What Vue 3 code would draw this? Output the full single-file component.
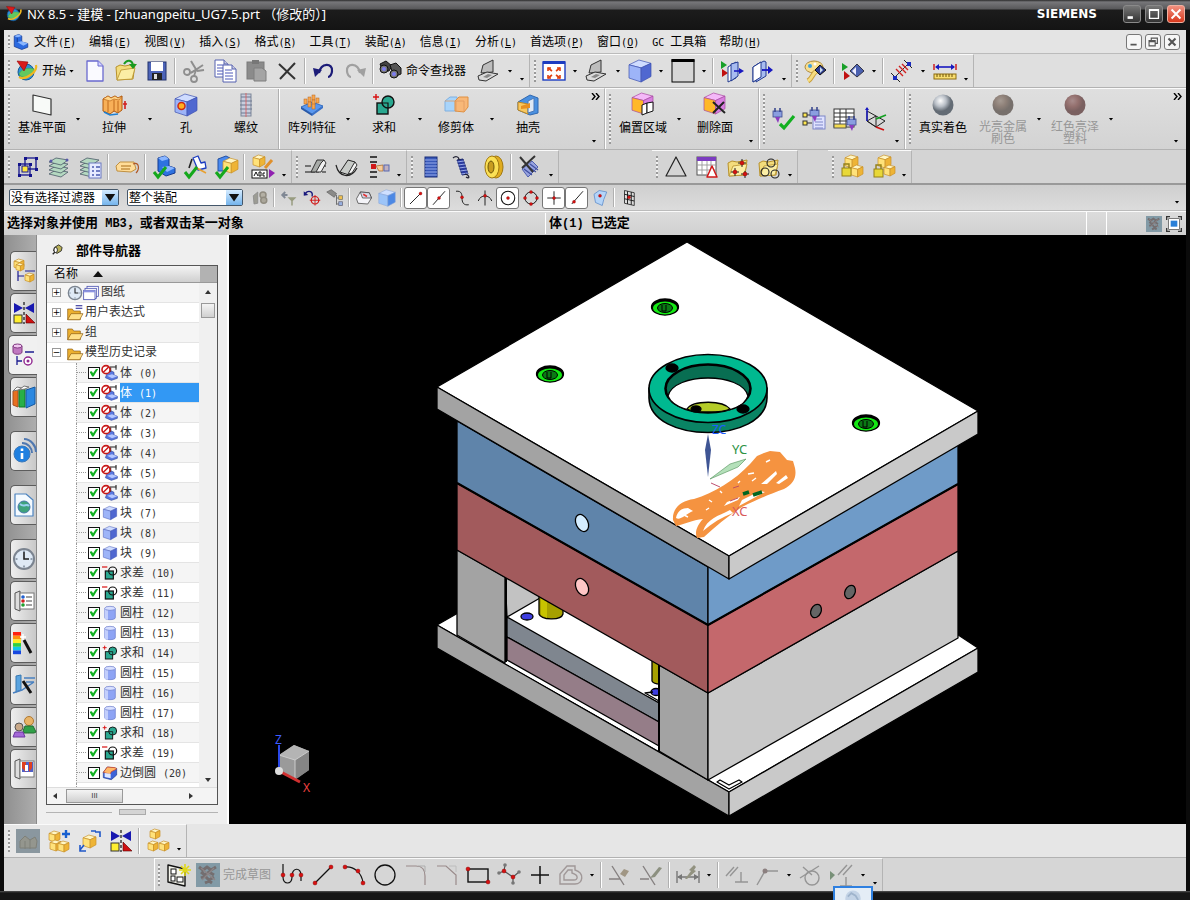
<script setup>
const P = (pts, fill, stroke = 'none', w = 1) =>
  `<polygon points="${pts}" fill="${fill}" stroke="${stroke}" stroke-width="${w}" stroke-linejoin="round"/>`
const L = (d, stroke = '#111', w = 1.2, fill = 'none') =>
  `<path d="${d}" fill="${fill}" stroke="${stroke}" stroke-width="${w}"/>`
const C = (x, y, r, fill, stroke = 'none', w = 1) =>
  `<circle cx="${x}" cy="${y}" r="${r}" fill="${fill}" stroke="${stroke}" stroke-width="${w}"/>`
const R = (x, y, w, h, fill, stroke = 'none', sw = 1) =>
  `<rect x="${x}" y="${y}" width="${w}" height="${h}" fill="${fill}" stroke="${stroke}" stroke-width="${sw}"/>`
const cube = (x, y, s, a, b, c, st) => {
  const p = (u, v) => `${x + u * s},${y + v * s}`
  return P([p(0, 0.22), p(0.45, 0), p(1, 0.15), p(0.55, 0.36)].join(' '), a, st, 0.7) +
    P([p(0, 0.22), p(0.55, 0.36), p(0.55, 1), p(0, 0.82)].join(' '), b, st, 0.7) +
    P([p(0.55, 0.36), p(1, 0.15), p(1, 0.75), p(0.55, 1)].join(' '), c, st, 0.7)
}
const gold = (x, y, s) => cube(x, y, s, '#fff6c4', '#ffe27a', '#eeb436', '#c89028')
const blue = (x, y, s) => cube(x, y, s, '#cfdcff', '#9db4f8', '#5068d0', '#3c50b0')
const dot = (x, y) => C(x, y, 2, '#d81010', '#700', 0.4)
const folder = L('M2 8 L6 6 L11 7 L21 5 L19 20 L3 21 Z', '#b8922c', 1, '#f3dc7c') + L('M3 21 L7 11 L21 9 L18 20 Z', '#b8922c', 0.8, '#fbeea5')
const tick = (x, y) => L(`M${x} ${y} l4 5 l8 -10`, '#14a81c', 3)
const joins = (a, b) => R(5, 10, 11, 11, a, '#111', 1.4) + C(16, 9, 6, b, '#111', 1.4) + L('M10 10 H16 V15', '#111', 1.2)
const plug = (x, y) => R(x, y + 3, 9, 6, '#8a9ee0', '#3c4a90', 0.8) + L(`M${x + 2} ${y} v4 M${x + 7} ${y} v4`, '#3c4a90', 1.6) + P(`${x + 2},${y + 9} ${x + 7},${y + 9} ${x + 5},${y + 15}`, '#8c3cc0')
const laptop = P('4,14 6,6 16,1 16,13', '#bdbdbd', '#333') + P('1,17 10,13 21,15 9,22 2,21', '#dadada', '#333') + P('6,18 11,15 15,16 10,19', '#888')
const sheet = (x, y) => P(`${x},${y} ${x + 9},${y} ${x + 13},${y + 4} ${x + 13},${y + 17} ${x},${y + 17}`, '#fff', '#5560b0') + L(`M${x + 9} ${y} v4 h4`, '#5560b0', 1, '#ccd')
const lines = (x, y, c) => L(`M${x} ${y} h7 M${x} ${y + 3} h8 M${x} ${y + 6} h8 M${x} ${y + 9} h8`, c, 1)
const layers = (c) => [19, 15, 11, 7].map(y => P(`2,${y} 9,${y - 4} 21,${y - 2} 14,${y + 3}`, c, '#4a5a68', 0.8)).join('')
const mirror = P('2,2 11,7 2,12', '#1818b0') + P('22,2 13,7 22,12', '#1818b0') + L('M12 1 V4 M12 6 V9 M12 11 V14 M12 16 V19 M12 21 V23', '#111', 1.2) + R(2, 14, 8, 8, '#ffee30', '#333') + P('14,13 14,22 23,22', '#d01010', '#500', 0.6)
const nx = C(11, 13, 8, '#2c8fd8', '#155a98') + L('M4 15 C8 22 20 16 19 10 C14 8 6 10 4 15', '#3aa84a', 0.6, '#62c860') + L('M4 18 C11 22 23 12 21 6', '#f0b820', 2.2) + P('2,2 13,3 9,12', '#d81c1c', '#900', 0.6)
const sphere = (a, b, c) => `<defs><radialGradient id="s${a.slice(1)}" cx=".38" cy=".3"><stop offset="0" stop-color="${a}"/><stop offset=".55" stop-color="${b}"/><stop offset="1" stop-color="${c}"/></radialGradient></defs><circle cx="12" cy="12" r="10.5" fill="url(#s${a.slice(1)})"/>`
const clock = C(12, 12, 10, '#dfeaf6', '#7b8490', 2) + L('M12 5 V12 H17', '#222', 1.6) + L('M12 3.5v2 M12 18.5v2 M3.5 12h2 M18.5 12h2', '#456', 1)
const noEntry = C(6, 7, 6, '#fff', '#c81818', 2.4) + L('M2 11 L10 3', '#c81818', 2.2)
const book = P('3,4 8,2 8,22 3,20', '#ddd', '#555') + R(8, 4, 14, 16, '#fff', '#777')

const icons = {
  nx,
  part: P('3,4 9,2 13,4 13,12 21,14 21,19 13,22 3,18', '#2b6ae0', '#153a90') + P('3,4 9,2 13,4 7,6', '#8ab6ff') + P('7,12 13,11 21,14 15,17', '#8ab6ff') + L('M7 6 V12', '#153a90'),
  new: P('4,2 15,2 20,7 20,22 4,22', '#fafaff', '#6a6ad0', 1.3) + L('M15 2 V7 H20', '#6a6ad0', 1, '#d4d4ff'),
  open: folder + L('M10 5 C13 0 18 1 19 6', '#1a9a20', 2) + P('15,5 23,5 19,10', '#1a9a20'),
  save: R(3, 3, 18, 18, '#4d64b8', '#22326c') + R(6, 3, 12, 9, '#fff') + R(7, 14, 10, 7, '#222') + R(9, 15, 3, 5, '#ddd'),
  cut: L('M9 14 L21 6 M15 12 L9 2 M15 12 L22 11', '#8e8e8e', 2) + C(5, 13, 3, 'none', '#8e8e8e', 1.8) + C(12, 20, 3, 'none', '#8e8e8e', 1.8) + L('M8 14 L14 11 L12 17', '#8e8e8e', 1.8),
  copy: sheet(2, 1) + lines(4, 6, '#4c58b8') + sheet(10, 6) + lines(12, 11, '#4c58b8'),
  paste: R(3, 3, 17, 17, '#8b8b8b', '#7a7a7a') + R(8, 1, 7, 4, '#777') + P('10,9 18,9 22,12 22,22 10,22', '#a4a4a4', '#7f7f7f'),
  del: L('M4 5 L20 20 M20 4 L5 20', '#333', 2),
  undo: L('M7 14 C9 3 21 4 20 12 C20 15 18 18 16 18', '#1c1c78', 2.2) + P('1,9 10,11 3,18', '#1c1c78'),
  redo: L('M17 14 C15 3 3 4 4 12 C4 15 6 18 8 18', '#a0a0a0', 2.2) + P('23,9 14,11 21,18', '#a0a0a0'),
  find: P('1,5 7,2 13,7 10,12 4,12', '#444', '#111') + P('11,6 17,4 22,9 22,15 15,18', '#555', '#111') + C(5, 10, 4, '#777', '#111') + C(5, 10, 2, '#7d7df0') + C(15, 15, 4, '#777', '#111') + C(15, 15, 2, '#7d7df0'),
  laptop,
  fit: R(1, 3, 22, 18, '#fff', '#1c3cc0', 1.4) + R(1, 2, 22, 3, '#1c3cc0') + L('M6 9 l4 3 M18 9 l-4 3 M6 19 l4 -3 M18 19 l-4 -3', '#e04010', 1.6) + L('M6 12 V9 H9 M15 9 H18 V12 M6 16 V19 H9 M15 19 H18 V16', '#e04010', 1.6),
  cube: blue(1, 1, 22),
  square: R(1, 1, 22, 22, '#d6d6d6', '#000', 1) + R(0.5, 0, 23, 3, '#000'),
  clipA: P('1,2 7,6 1,10', '#18a028') + P('2,10 8,14 2,18', '#c01010') + P('8,8 16,3 16,19 8,23', '#fff', '#223a90') + P('11,5 18,3 18,17 11,22', '#a8bcf0', '#223a90') + L('M14 12 H21', '#1818c0', 1.6) + P('19,9 24,12 19,15', '#1818c0'),
  clipB: P('2,8 10,3 10,18 2,23', '#fff', '#223a90') + P('5,6 13,2 15,3 15,17 5,23', '#a8bcf0', '#223a90') + P('2,8 10,3 10,18 2,23', '#fff', '#223a90') + L('M11 11 H19', '#1818c0', 1.8) + P('17,7 22,11 17,15', '#1818c0'),
  palette: `<ellipse cx="10" cy="8" rx="9" ry="6" fill="#f8df90" stroke="#b08a38"/>` + C(6, 7, 2, '#40a0e0') + C(11, 5, 1.5, '#fff') + L('M13 12 C8 14 9 19 4 22', '#caa040', 5) + L('M13 12 C8 14 9 19 4 22', '#f5dc80', 3) + P('16,6 22,11 16,16 11,11', '#2c3c90', '#111') + P('16,8 19,11 16,14', '#cde'),
  showhide: P('1,4 7,8 1,12', '#18a028') + P('3,12 9,17 3,21', '#c01010') + P('16,5 23,12 16,18 9,12', '#4a60b0', '#334') + P('15,8 15,16 11,12', '#eef'),
  measure: L('M4 19 L19 4', '#333', 1) + L('M6 10 L13 17 M9 7 L16 14 M12 5 L18 11', '#d02020', 1.4) + L('M1 14 l9 9 M14 1 l8 8', '#222', 1) + R(3, 17, 4, 4, '#1c2cc0') + R(17, 3, 4, 4, '#1c2cc0'),
  ruler: L('M1 5 V11 M23 5 V11', '#d02020', 1.5) + L('M3 8 H21', '#1818c0', 1.6) + P('2,8 6,5 6,11', '#1818c0') + P('22,8 18,5 18,11', '#1818c0') + R(1, 15, 22, 5, '#f8de70', '#8e6c10') + L('M4 15v3 M7 15v3 M10 15v3 M13 15v3 M16 15v3 M19 15v3', '#6c5008', 1),
  plane: P('3,2 21,6 21,22 3,18', '#f8faf8', '#333', 1.2),
  extrude: P('1,6 6,3 9,5 13,3 16,5 20,3 20,17 16,20 12,18 8,21 1,18', '#f8b058', '#b0580c') + P('1,6 6,3 9,5 13,3 16,5 20,3 17,7 12,6 8,8', '#ffd68a', '#b0580c', 0.6) + L('M6 8 V19 M12 7 V18 M16 8 V19', '#b0580c', 0.8) + L('M2 19 L8 22 L16 21', '#2080d0', 1.4) + L('M23 16 V8 M21 11 h4', '#d02020', 1.6),
  hole: blue(1, 1, 22) + C(7.5, 13, 3.5, '#ffb020', '#d02810', 1.5),
  thread: R(7, 1, 10, 22, '#c8cede', '#7c8698') + L('M7 4h10 M6 8h12 M6 12h12 M6 16h12 M7 20h10', '#6d7890', 1.2) + L('M12 0 V24', '#d86060', 0.9),
  pattern: P('1,14 12,9 23,13 12,21', '#5a98f0', '#3870c0') + P('1,14 12,21 12,23 1,16', '#2858a8') + P('12,21 23,13 23,15 12,23', '#3870c8') + [[5, 10], [9, 8], [13, 6], [9, 13], [13, 11], [17, 9], [13, 15]].map(([x, y]) => R(x - 1, y - 4, 3, 5, '#f8a850', '#b8641c', 0.5)).join(''),
  unite: joins('#2aa890', '#2aa890') + L('M1 4 h6 M4 1 v6', '#d81010', 1.4),
  trim: P('1,8 6,4 13,4 13,18 1,18', '#a8d4fa', '#80b0e0') + P('11,8 15,4 24,4 24,14 20,19 11,18', '#f8b878', '#e09040') + L('M12 8 V18 M1 8 H20 V18', '#e09a60', 0.8),
  shell: P('2,9 14,2 22,5 22,20 14,22 2,17', '#4a90e0', '#3068b0') + P('2,9 12,11 12,21 2,17', '#f8c860', '#c08820') + P('12,8 18,5 18,18 12,20', '#dfe8f4', '#4878b8') + P('5,13 14,10 14,15 5,16', '#e89020'),
  offset: cube(1, 0, 21, '#f4b8f8', '#ffb828', '#d880e0', '#a848a0') + P('11,12 16,10 16,20 11,22', '#fff', '#111') + P('16,10 22,9 22,18 16,20', '#fff', '#111'),
  delface: cube(1, 0, 21, '#f4b8f8', '#ffb828', '#d880e0', '#a848a0') + L('M10 9 L22 20 M21 9 L10 20', '#222', 2),
  plugok: plug(2, 1) + L('M9 17 L13 21 L23 9', '#12b020', 3.2),
  plugtree: R(1, 6, 4, 4, '#ffe850', '#333') + R(1, 14, 4, 4, '#ffe850', '#333') + L('M5 8h5 M5 16h5', '#333') + R(11, 9, 12, 13, '#dfe2ff', '#7c86c8') + lines(13, 12, '#7c86c8') + plug(8, 0),
  plugtable: R(1, 2, 20, 18, '#fff', '#333') + L('M1 6h20 M1 10h20 M1 14h20 M7 2v18 M13 2v18', '#333', 1) + R(1, 17, 12, 4, '#f4dc50', '#555') + plug(14, 9),
  csys: P('3,4 12,9 12,20 3,14', 'none', '#222') + P('3,14 12,9 21,14 12,20', 'none', '#222') + L('M3 14 V1', '#1818c0', 1.5) + L('M12 12 L22 8', '#12a020', 1.8) + L('M12 20 L20 23', '#d01010', 1.8) + P('1,3 3,0 5,3', '#1818c0'),
  chrome: sphere('#fefefe', '#b8bec6', '#636b74'),
  bronze: sphere('#a59a92', '#8e8078', '#77706c'),
  redball: sphere('#a88c8c', '#94706e', '#7a6060'),
  editsk: R(3, 9, 11, 11, 'none', '#14148c', 1.3) + R(9, 3, 11, 11, 'none', '#14148c', 1.3) + R(6, 11, 6, 6, '#ffe83c', '#14148c') + [[3, 9], [14, 9], [3, 20], [14, 20], [9, 3], [20, 3], [20, 14]].map(([x, y]) => R(x - 1, y - 1, 3, 3, '#14148c')).join(''),
  layers: layers('#b4d8c0') + C(4, 6, 1.5, '#5858a8') + C(20, 5, 1.5, '#5858a8'),
  layerlist: layers('#b4d8c0') + R(11, 8, 12, 15, '#e6eaff', '#6a78c0') + L('M14 12h2 M18 12h4 M14 16h2 M18 16h4 M14 20h2 M18 20h4', '#4a5ab0', 1.6),
  tag: P('1,11 5,7 19,7 21,14 16,17 2,16', '#ffdc98', '#c09040') + L('M6 11h10 M6 14h9', '#a86c18', 1) + L('M18 9 C24 6 25 14 21 18', '#b05828', 1.2),
  okpart: P('6,3 13,1 17,4 17,11 23,13 23,18 14,21 6,16', '#2e72e0', '#153a90') + P('6,3 13,1 17,4 10,6', '#8ab6ff') + P('10,12 17,11 23,13 15,17', '#8ab6ff') + tick(2, 17),
  oksk: P('10,3 15,1 18,8 22,7 23,13 15,15', '#fff', '#1c3cc0', 1.3) + L('M9 4 L6 13', '#222', 1.6) + L('M12 12 L23 18', '#e8a030', 1.6) + tick(2, 17),
  okasm: P('4,4 12,1 16,3 14,16 4,16', '#4a8af0', '#2450a0') + gold(9, 3, 15) + tick(2, 17),
  abc: gold(2, 0, 12) + L('M21 5 L14 13', '#e0902c', 3) + R(1, 15, 15, 8, '#fff', '#111') + L('M3 21l2-4 2 4 M8 17v4h2v-4z M14 18h-2v3h2', '#111', 1) + P('18,14 24,18 18,23', '#9020b0'),
  groove: L('M1 11 H7 M1 17 H11 M18 17 H22 M18 11 H22', '#111', 1.2) + P('7,17 13,5 20,5 15,17', '#a8aba8', '#333') + P('12,17 17,8 20,5 22,8 17,17', '#f0f0f0', '#333'),
  groove2: P('5,17 13,5 20,7 14,20', '#c8cbc8', '#222') + P('13,19 18,10 20,7 22,10 17,18', '#f4f4f4', '#333') + L('M1 10 C4 23 16 24 22 13', '#222', 1.2),
  point: L('M4 2h7 M4 7h7 M4 17h7 M4 22h7', '#111', 1.5) + R(5, 9, 5, 5, '#d01818') + P('10,11 17,10 17,16 13,16', '#f8cc98', '#a87038', 0.8) + R(18, 10, 5, 6, '#c0b0c0', '#5868b0'),
  spring: R(6, 2, 12, 20, '#3858b8', '#182c78') + L('M6 5h12 M6 8h12 M6 11h12 M6 14h12 M6 17h12 M6 20h12', '#98acec', 1),
  spring2: P('7,5 13,4 18,19 12,20', '#2c3ca0', '#182468') + L('M7 7l7-1 M8 10l7-1 M9 13l7-1 M10 16l7-1 M11 19l7-1', '#98a8e8', 1) + L('M3 3 C5 1 9 1 9 5 M15 19 C20 20 20 25 16 22', '#223', 1.2),
  washer: `<ellipse cx="15" cy="12" rx="7" ry="11" fill="#e0ac20" stroke="#a07810"/><ellipse cx="11" cy="12" rx="7" ry="11" fill="#fbe055" stroke="#a07810"/><ellipse cx="10" cy="12" rx="3" ry="6" fill="#c89c20" stroke="#6c5408"/>`,
  springx: P('4,14 14,6 20,12 10,22', '#98a4e0', '#5060b0') + L('M6 14l8 6 M9 11l9 6 M12 9l8 6', '#4050a0', 1.2) + L('M2 2 L15 17 M17 1 L4 13', '#333', 2),
  tri: P('12,2 22,21 2,21', 'none', '#222', 1.2),
  tritable: R(2, 2, 19, 18, '#fff', '#555') + R(2, 2, 19, 4, '#7c3cc0') + L('M2 10h19 M2 15h19 M7 6v14 M12 6v14 M16 6v14', '#999', 0.9) + P('17,11 22,22 12,22', '#fff', '#d01818', 1.5),
  folderpt: folder + L('M16 4v8 M12 8h8 M9 13v8 M5 17h8 M19 16v7 M15 19h8', '#222', 1) + dot(16, 8) + dot(9, 17) + dot(19, 19),
  foldercir: folder + C(14, 8, 4, 'none', '#222', 1.1) + C(8, 17, 4, 'none', '#222', 1.1) + C(18, 19, 4, 'none', '#222', 1.1),
  lock1: gold(5, 0, 13) + gold(11, 10, 12) + R(2, 13, 9, 8, '#e8d838', '#948018') + L('M4 13 V9 h5 V13', '#948018', 1.4),
  lock2: gold(7, 0, 13) + gold(13, 10, 11) + R(3, 14, 9, 8, '#e8d838', '#948018') + L('M5 14 V10 h5 V14', '#948018', 1.4),
  g1: P('3,9 9,4 9,19 4,20', '#9c9c94', '#888') + C(16, 8, 4, '#b4b0a4', '#908c80', 2) + C(17, 15, 4, '#aaa69a', '#908c80', 2),
  g2: L('M10 8 H4 M7 4 L3 8 L7 12', '#808894', 2.5) + P('10,11 22,11 17,16 17,22 15,22 15,16', '#989c80'),
  snapset: L('M3 6 C7 1 14 3 12 10', '#18187c', 1.8) + P('1,3 7,8 1,9', '#18187c') + C(16, 15, 5, 'none', '#d01818', 1.6) + L('M16 8 v14 M9 15 h14', '#d01818', 1.2),
  g3: P('1,4 7,1 14,6 11,11', '#8a8a88', '#666') + L('M14 8 v13 M14 12h5 M14 20h5', '#666') + R(17, 9, 5, 5, '#f0c050', '#776') + R(17, 17, 5, 5, '#98b0e0', '#667'),
  boxsel: P('2,13 7,4 19,5 22,12 17,20 4,19', '#f4f4f8', '#444') + P('7,4 19,5 22,12 10,12', '#d8d8e4', '#444') + L('M11 7 l5 3', '#e03030', 2),
  glass: cube(1, 1, 22, '#cfe0ff', '#9cc4f8', '#4c88e4', '#88a4d8'),
  endpt: L('M4 20 L19 5') + dot(18, 6),
  midpt: L('M4 21 L20 3') + dot(12, 12),
  ctrlpt: L('M4 3 C12 2 12 8 12 12 C12 18 14 22 21 21') + dot(12, 11),
  cross: L('M12 2 V22 M3 16 C6 7 18 7 21 16') + dot(12, 9),
  centre: C(12, 12, 9, 'none', '#111', 1.4) + dot(12, 12),
  quad: C(12, 12, 8, 'none', '#111', 1.3) + dot(12, 4) + dot(12, 20) + dot(4, 12) + dot(20, 12),
  exist: L('M12 3 V21 M3 12 H21') + dot(12, 12),
  oncurve: L('M5 20 L20 3') + dot(8, 17),
  onface: P('4,7 11,2 21,4 17,14 15,22 6,18', '#b4d4f8', '#5888c8') + dot(12, 9),
  grid: P('6,2 19,5 19,22 6,19', '#ddd', '#111') + L('M10 3v17 M15 4v17 M6 7l13 3 M6 13l13 3', '#111', 1.2) + dot(12, 11),
  pressed: R(0, 0, 24, 24, '#8a979f') + P('4,19 4,12 9,7 14,11 19,8 21,12 20,19', '#94968e', '#7f8078') + L('M9 12v8 M14 11v9', '#7f8078', 1),
  pressed2: R(0, 0, 24, 24, '#829aa6') + L('M3 4l4 3 4-3 4 3 5-3 M5 9l4 3 4-3 5 3 M5 15l4-2 4 4 5-3 M9 20l4-2 3 2', '#746e70', 3) + L('M5 5l14 12 M18 5l-12 12', '#8c8486', 1.4),
  full: L('M1 6 V1 H6 M18 1 H23 V6 M23 18 V23 H18 M6 23 H1 V18', '#333', 2) + R(4, 4, 16, 16, '#fff', '#444') + R(7, 7, 10, 9, '#2a80d8'),
  asmadd: gold(2, 2, 11) + gold(3, 11, 11) + gold(11, 12, 11) + L('M19 1 v8 M15 5 h8', '#1860d0', 2.4),
  asmmove: gold(5, 6, 13) + L('M17 3 h5 v5 M13 2 l5 0 M6 16 l-4 5 M2 16 v6 h6', '#2058c8', 1.6),
  mirror,
  asmarr: gold(4, 0, 10) + gold(2, 12, 10) + gold(13, 12, 10),
  sketch: P('2,2 19,6 19,23 2,19', '#f4f4ec', '#111', 1.4) + R(5, 6, 5, 5, '#fff', '#111') + R(5, 13, 4, 5, '#fff', '#111') + R(11, 14, 6, 5, '#fff', '#111') + L('M19 1v12 M13 7h12 M15 3l8 8 M23 3l-8 8', '#e0d818', 1.6),
  profile: L('M3 1 V14 C3 22 12 22 12 14 C12 4 21 4 21 12 V18') + dot(3, 12) + dot(12, 12) + dot(21, 12),
  line: L('M4 20 L20 4') + dot(4, 20) + dot(20, 4),
  arc: L('M3 4 C12 3 20 10 21 20') + dot(3, 4) + dot(16, 8) + dot(21, 20),
  circle: C(12, 12, 10, 'none', '#111', 1.3),
  fillet: L('M2 3 H12 C19 3 21 8 21 13 V22', '#998a8a', 1.2) + L('M14 3 H21 V9', '#aaa', 0.9),
  chamfer: L('M2 3 H11 L21 12 V22', '#998a8a', 1.2) + L('M14 3 H21 V9', '#bbb', 0.9),
  rect: R(2, 6, 20, 13, 'none', '#111', 1.4) + dot(2, 6) + dot(22, 19),
  spline: L('M2 10 L7 8 L8 2 M7 8 L16 14 L22 9 M16 14 V20', '#555', 1.2) + dot(7, 8) + dot(16, 14) + C(2, 10, 1.8, '#777') + C(8, 2, 1.8, '#777') + C(22, 9, 1.8, '#777') + C(16, 20, 1.8, '#777'),
  plus: L('M12 3 V21 M3 12 H21', '#111', 1.5),
  offc: L('M1 21 V11 L8 3 H16 V7 C26 10 24 21 16 21 Z M5 17 V12 L9 7 H13 V10 C20 12 19 17 15 17 Z', '#a09898', 1.4),
  qtrim: L('M4 3 L16 22 M1 16 H12', '#858080', 1.4) + P('12,11 16,6 21,8 17,14', '#a09684'),
  qext: L('M4 3 L16 22 M1 16 H10', '#858080', 1.4) + P('11,15 20,4 23,5 16,14', '#8c9080'),
  dim: L('M1 8 V20 M23 8 V20 M2 14 H22', '#777', 1.4) + P('1,14 6,11 6,17', '#777') + P('23,14 18,11 18,17', '#777') + P('9,16 15,8 13,7 18,2 20,4 18,7 20,8 11,16', '#929280'),
  constr: L('M1 13 L9 4 M5 13 L13 4 M16 9 V19 M10 19 H23', '#959595', 1.4),
  constr2: L('M1 22 L9 8 H22', '#959595', 1.4) + C(9, 8, 2.5, '#8c8080'),
  tang: C(13, 15, 7, 'none', '#959595', 1.4) + L('M1 15 L20 3 M4 4 L13 12', '#959595', 1.4),
  constr3: P('0,8 5,12 0,17', '#789078') + L('M8 12 L17 2 M13 12 L22 2 M16 14 V23 M10 23 H22', '#959595', 1.4),
  // navigator glyphs
  clock,
  sheets: R(6, 2, 17, 15, '#fff', '#4850b0', 1.2) + R(3, 5, 17, 15, '#fff', '#4850b0', 1.2) + R(1, 8, 17, 14, '#fff', '#4850b0', 1.2) + R(1, 8, 17, 3, '#8c94e0'),
  fold: P('1,22 1,6 8,6 10,9 20,9 20,22', '#ecb030', '#8c5c10') + P('1,22 6,13 24,13 19,22', '#ffe08a', '#8c5c10'),
  foldeq: P('1,22 1,6 8,6 10,9 20,9 20,22', '#ecb030', '#8c5c10') + P('1,22 6,13 24,13 19,22', '#ffe08a', '#8c5c10') + L('M13 1h10 M13 5h10', '#1c1c90', 1.6),
  body: P('8,12 14,9 18,11 18,15 23,17 23,20 14,23 5,19', '#5a78e0', '#3048a0') + P('8,16 15,14 23,17 15,20', '#b6c8ff') + L('M13 4 V10 M12 3 h10 M21 0 V7', '#222', 1.6) + noEntry,
  block: blue(2, 2, 20),
  subtract: R(5, 9, 12, 12, '#2aa890', '#111', 1.8) + C(16, 9, 6, 'none', '#111', 1.8) + L('M0 3 h8', '#d81010', 1.8),
  cyl: `<path d="M4 5 V19 C4 23 20 23 20 19 V5" fill="#8ea4f4" stroke="#6878c8"/><path d="M4 5 V19 C4 21 7 22 9 22 V7Z" fill="#c3cffc"/><ellipse cx="12" cy="5" rx="8" ry="3" fill="#d8e0ff" stroke="#6878c8"/>`,
  blend: P('2,11 8,3 22,5 22,15 14,22 2,19', '#3c62d8', '#203c90') + P('2,11 8,3 20,4 22,6 14,10 12,14', '#ffb868', '#d03818') + P('4,12 13,13 13,20 4,18', '#dfe8ff'),
  // resource bar
  tabasm: gold(2, 0, 10) + gold(4, 4, 8) + L('M6 12 V22 M6 17 H12 M13 12h10', '#1c1c90', 1.2) + gold(13, 14, 9),
  tabpart: `<path d="M2 3 V9 C2 12 11 12 11 9 V3" fill="#c078c0" stroke="#803880"/><ellipse cx="6.5" cy="3" rx="4.500" ry="2" fill="#f0c8f0" stroke="#803880"/>` + L('M6 13 V22 M6 18 H11 M14 9h9', '#1c1c90', 1.3) + C(17, 18, 4, '#fff', '#902890', 1.4) + C(17, 18, 1.5, '#902890'),
  books: P('1,6 6,4 6,22 1,20', '#e87020', '#a85020') + P('7,5 13,3 13,22 7,22', '#28b048', '#107828') + P('14,5 23,2 23,19 14,23', '#2c88e0', '#1458a0') + P('1,6 5,2 10,3 6,5', '#fff', '#777') + P('7,5 12,1 17,2 13,4', '#fff', '#777'),
  info: C(10, 15, 8, '#2080e0', '#3c78b8') + L('M10 14 V20 M10 9.5 V12', '#fff', 2.6) + L('M10 4 C16 4 20 9 20 14 M12 0 C19 0 24 7 24 13', '#5078b0', 2),
  web: P('3,1 14,1 21,7 21,23 3,23', '#f4faff', '#4c84c0', 1.2) + C(12, 14, 6, '#3ea27c', '#4878a8') + L('M8 11 C12 15 14 10 17 13', '#9ad0f0', 2),
  list: book + C(11, 8, 1.8, '#2060d0') + C(11, 12, 1.8, '#d02020') + C(11, 16, 1.8, '#20a030') + L('M14 8h6 M14 12h6 M14 16h6', '#444', 1.2),
  rainbow: ['#ff2010', '#ff9010', '#ffee20', '#30d040', '#10c8e8', '#1848e0'].map((c, i) => R(1, 1 + i * 3.7, 8, 3.7, c)).join('') + L('M12 9 L19 22', '#111', 3) + L('M11 3v6 M8 6h6', '#fff', 1.4),
  wand: P('4,3 9,2 9,17 4,19', '#5aa4e0', '#3878b0') + L('M1 20 L10 17 L22 9 M12 5 H23 M14 9 h8', '#4880c0', 1.4) + L('M11 8 L19 20', '#111', 3),
  people: C(17, 6, 4.5, '#e8b468', '#b07830') + P('11,16 13,11 21,11 24,17 22,18 12,18', '#30a048', '#246c30') + C(7, 12, 4, '#c8a888', '#555') + P('1,22 3,17 11,17 13,22', '#a468d8', '#6c38a0'),
  photo: book + R(10, 5, 11, 10, '#5060c8') + P('10,5 14,5 14,15 10,11', '#e04020') + P('20,5 17,5 17,15 20,11', '#e04020') + R(13, 8, 3, 6, '#fff'),
}

const a = { k: 'arrow' }
const s = { k: 'sep' }
const o = { k: 'more' }
const i = (...n) => n.map(x => ({ k: 'icon', n: x }))
const big = (n, t, off) => ({ k: 'big', n, t, off })

const menus = [['文件', 'F'], ['编辑', 'E'], ['视图', 'V'], ['插入', 'S'], ['格式', 'R'], ['工具', 'T'], ['装配', 'A'], ['信息', 'I'], ['分析', 'L'], ['首选项', 'P'], ['窗口', 'O'], ['工具箱', ''], ['帮助', 'H']]

const rows = [
  { cls: 'r1', bars: [
    { items: [{ k: 'start', n: 'nx', t: '开始' }, ...i('new', 'open', 'save'), s, ...i('cut', 'copy', 'paste', 'del'), s, ...i('undo', 'redo'), s, { k: 'label', n: 'find', t: '命令查找器' }, ...i('laptop'), a, o] },
    { items: [...i('fit'), a, ...i('laptop'), a, ...i('cube'), a, ...i('square'), a, s, ...i('clipA', 'clipB'), o] },
    { items: [...i('palette'), s, ...i('showhide'), a, s, ...i('measure'), a, ...i('ruler'), o] },
  ] },
  { cls: 'r2', bars: [
    { items: [big('plane', '基准平面'), a, big('extrude', '拉伸'), a, big('hole', '孔'), big('thread', '螺纹'), s, big('pattern', '阵列特征'), a, big('unite', '求和'), a, big('trim', '修剪体'), a, big('shell', '抽壳'), { k: 'chev' }] },
    { items: [big('offset', '偏置区域'), a, big('delface', '删除面'), o] },
    { items: [...i('plugok', 'plugtree', 'plugtable', 'csys'), o] },
    { cls: 'grow', items: [big('chrome', '真实着色'), big('bronze', '光亮金属刷色', true), a, big('redball', '红色亮泽塑料', true), a, { k: 'chev' }] },
  ] },
  { cls: 'r3', bars: [
    { items: [...i('editsk', 'layers', 'layerlist'), s, ...i('tag'), s, ...i('okpart', 'oksk', 'okasm'), s, ...i('abc'), o] },
    { items: [...i('groove', 'groove2', 'point'), o] },
    { items: [...i('spring', 'spring2', 'washer'), s, ...i('springx'), o] },
    { cls: 'far', items: [...i('tri', 'tritable', 'folderpt', 'foldercir'), o] },
    { cls: 'near', items: [...i('lock1', 'lock2'), o] },
  ] },
]
const bottom = [
  { cls: 'b1', bars: [{ items: [...i('pressed', 'asmadd', 'asmmove', 'mirror'), s, ...i('asmarr'), o] }] },
  { cls: 'b2', bars: [{ items: [...i('sketch'), { k: 'label', n: 'pressed2', t: '完成草图', off: true }, ...i('profile', 'line', 'arc', 'circle', 'fillet', 'chamfer', 'rect', 'spline', 'plus', 'offc'), a, s, ...i('qtrim', 'qext'), s, ...i('dim'), a, s, ...i('constr', 'constr2'), a, ...i('tang', 'constr3'), a, o] }] },
]
const snaps = [['g1'], 0, ['g2'], ['snapset'], ['g3'], 0, ['boxsel'], ['glass'], 0, ['endpt', 1], ['midpt', 1], ['ctrlpt'], ['cross'], ['centre', 1], ['quad'], ['exist', 1], ['oncurve', 1], ['onface'], 0, ['grid']]
const tabs = [['tabasm'], ['mirror'], ['tabpart', 'on'], ['books'], ['info', 'gap'], ['web', 'gap'], ['clock', 'gap'], ['list'], ['rainbow'], ['wand'], ['people'], ['photo']]

const roots = [
  { n: ['clock', 'sheets'], t: '图纸', e: '+' },
  { n: ['foldeq'], t: '用户表达式', e: '+' },
  { n: ['fold'], t: '组', e: '+' },
  { n: ['fold'], t: '模型历史记录', e: '−' },
]
const kinds = { body: '体', block: '块', subtract: '求差', cyl: '圆柱', unite: '求和', blend: '边倒圆' }
const feats = ['body', 'body', 'body', 'body', 'body', 'body', 'body', 'block', 'block', 'block', 'subtract', 'subtract', 'cyl', 'cyl', 'unite', 'cyl', 'cyl', 'cyl', 'unite', 'subtract', 'blend']
  .map((n, id) => ({ n, id, t: kinds[n] }))
</script>

<template>
  <div class="win">
    <header class="title">
      <svg class="ic18" viewBox="0 0 24 24" v-html="icons.nx"></svg>
      <h1>NX 8.5 - 建模 - [zhuangpeitu_UG7.5.prt （修改的）]</h1>
      <span class="brand">SIEMENS</span>
      <button class="cap" aria-label="最小化"><svg viewBox="0 0 18 18"><path d="M4 13h6" stroke="#fff" stroke-width="3" /></svg></button>
      <button class="cap" aria-label="最大化"><svg viewBox="0 0 18 18"><path d="M4 4h10v10h-10z M4 5h10" stroke="#fff" stroke-width="1.5" fill="none" /></svg></button>
      <button class="cap close" aria-label="关闭"><svg viewBox="0 0 18 18"><path d="M4 4l10 10M14 4l-10 10" stroke="#fff" stroke-width="2.2" /></svg></button>
    </header>

    <div class="body">
      <nav class="menu">
        <span class="grip"></span>
        <svg class="ic18" viewBox="0 0 24 24" v-html="icons.part"></svg>
        <div class="items">
          <button v-for="m in menus" :key="m[0]"><span v-if="!m[1]" class="lat">GC </span>{{ m[0] }}<span v-if="m[1]" class="lat">(<u>{{ m[1] }}</u>)</span></button>
        </div>
        <button class="mdi" aria-label="最小化窗口"><svg viewBox="0 0 16 16"><path d="M4 11h7" stroke="#555" stroke-width="2" /></svg></button>
        <button class="mdi" aria-label="还原窗口"><svg viewBox="0 0 16 16"><path d="M6 6V3.5h7v6h-2M3.5 6.5h7v6h-7z M3.5 7.5h7" stroke="#555" stroke-width="1.3" fill="none" /></svg></button>
        <button class="mdi" aria-label="关闭窗口"><svg viewBox="0 0 16 16"><path d="M4 4l8 8M12 4l-8 8" stroke="#555" stroke-width="2.4" /></svg></button>
      </nav>

      <div v-for="row in rows" :key="row.cls" class="row" :class="row.cls">
        <div v-for="(bar, bi) in row.bars" :key="bi" class="bar" :class="bar.cls" role="toolbar">
          <span class="grip"></span>
          <template v-for="(it, k) in bar.items" :key="k">
            <span v-if="it.k === 'sep'" class="sep"></span>
            <button v-else-if="it.k === 'arrow'" class="arrow" aria-label="展开"></button>
            <button v-else-if="it.k === 'more'" class="arrow more" aria-label="更多"></button>
            <div v-else-if="it.k === 'chev'" class="chev"><button aria-label="更多命令"><svg viewBox="0 0 9 7"><path d="M1 0l3 3.500-3 3.500M5 0l3 3.500-3 3.500" fill="none" stroke="#000" stroke-width="1.400" /></svg></button><button class="arrow more" aria-label="更多"></button></div>
            <button v-else :class="[it.k, { off: it.off }]" :aria-label="it.t || it.n">
              <svg class="ic" viewBox="0 0 24 24" v-html="icons[it.n]"></svg>
              <span v-if="it.t">{{ it.t }}</span>
              <i v-if="it.k === 'start'" class="tri"></i>
            </button>
          </template>
        </div>
      </div>

      <div class="filters">
        <label class="pick w1"><select aria-label="选择过滤器"><option>没有选择过滤器</option></select><i></i></label>
        <label class="pick w2"><select aria-label="选择范围"><option>整个装配</option></select><i></i></label>
        <template v-for="(sn, k) in snaps" :key="k">
          <button v-if="sn" class="snap" :class="{ on: sn[1] }" :aria-label="sn[0]"><svg class="ic18" viewBox="0 0 24 24" v-html="icons[sn[0]]"></svg></button>
          <span v-else class="sep"></span>
        </template>
        <button class="arrow more last" aria-label="更多"></button>
      </div>

      <div class="status">
        <p class="cue">选择对象并使用<span> MB3</span>，或者双击某一对象</p>
        <p class="msg">体<span>(1) </span>已选定</p>
        <span class="cell"></span>
        <span class="cell wide"></span>
        <button aria-label="选择"><svg class="ic16" viewBox="0 0 24 24" v-html="icons.pressed2"></svg></button>
        <button aria-label="全屏"><svg class="ic16" viewBox="0 0 24 24" v-html="icons.full"></svg></button>
      </div>

      <main class="main">
        <div class="tabs">
          <button v-for="t in tabs" :key="t[0]" :class="t[1]" :aria-label="t[0]"><svg class="ic" viewBox="0 0 24 24" v-html="icons[t[0]]"></svg></button>
        </div>
        <aside class="nav">
          <div class="navhead">
            <svg class="pin" viewBox="0 0 14 14"><path d="M2 12L5 9" stroke="#222" stroke-width="1.5" /><path d="M4 4l5-3 4 3-1 4-5 3-4-3z" fill="#b8b058" stroke="#222" /><ellipse cx="5.5" cy="7" rx="2" ry="3" fill="#fff" stroke="#222" /></svg>
            <h2>部件导航器</h2>
          </div>
          <div class="tree">
            <div class="th"><button>名称<i></i></button><span></span></div>
            <div class="tb">
              <ul>
                <li v-for="r in roots" :key="r.t" class="root">
                  <button class="exp" :aria-label="'展开' + r.t">{{ r.e }}</button>
                  <svg v-for="n in r.n" :key="n" class="ic16" viewBox="0 0 24 24" v-html="icons[n]"></svg>
                  <span>{{ r.t }}</span>
                </li>
                <li v-for="f in feats" :key="f.id" class="leaf" :class="{ sel: f.id === 1 }">
                  <label><input type="checkbox" checked><svg class="ic16" viewBox="0 0 24 24" v-html="icons[f.n]"></svg><span class="txt">{{ f.t }}<span class="lat">({{ f.id }})</span></span></label>
                </li>
                <li class="leaf"></li>
              </ul>
              <div class="vs"><i class="up"></i><span class="thumb"></span><i class="down"></i></div>
            </div>
            <div class="hs"><i class="lf"></i><span class="thumb">III</span><i class="rt"></i></div>
          </div>
          <div class="split"><span></span></div>
        </aside>

        <svg class="view" viewBox="229 235 957 589" preserveAspectRatio="xMidYMid meet" role="img" aria-label="模具装配">
          <g stroke="#000" stroke-width="1.3" stroke-linejoin="round">
            <polygon points="437,625 708,470 978,648 729,792" fill="#fff" />
            <polygon points="437,625 729,792 729,816 437,648" fill="#a3a3a3" />
            <polygon points="729,792 978,648 978,672 729,816" fill="#c9c9c9" />
            <polygon points="505,570 660,640 660,751 505,663" fill="#fff" stroke="none" />
            <polygon points="505,575 540,590 540,598 507,617" fill="#c2c2c2" />
            <path d="M539 590V614C541 620 561 621 563 614V600Z" fill="#a6a000" />
            <path d="M547 590V618L541 615V590Z" fill="#c8c400" stroke="none" />
            <path d="M652 655V681C653 683 656 684 660 684V655Z" fill="#a6a000" />
            <ellipse cx="527" cy="616.5" rx="6" ry="3.5" fill="#3e3ee0" />
            <ellipse cx="656" cy="692" rx="5" ry="3.5" fill="#3e3ee0" />
            <path d="M653 692L645 693L659 701M648 697L659 703" fill="none" />
            <polygon points="507,617 659,703 659,722 507,637" fill="#7f868f" />
            <polygon points="507,637 659,722 659,746 507,660" fill="#957d88" />
            <polygon points="457,550 505,577 505,663 457,635" fill="#a3a3a3" />
            <path d="M506 577V662" stroke-width="2" />
            <polygon points="659,665 708,693 708,780 659,751" fill="#a3a3a3" />
            <path d="M659 665V751" stroke-width="2" />
            <polygon points="708,693 958,551 958,638 708,780" fill="#c9c9c9" />
            <polygon points="457,483 708,625 708,693 457,550" fill="#a25a5c" />
            <polygon points="708,625 958,484 958,551 708,693" fill="#c4686c" />
            <polygon points="457,421 708,567 708,625 457,483" fill="#5f84aa" />
            <polygon points="708,567 958,440 958,484 708,625" fill="#6f9bc8" />
            <path d="M457 483L708 625L958 484" fill="none" stroke-width="2.2" />
            <polygon points="687,242 978,411 729,556 437,387" fill="#fff" />
            <polygon points="437,387 729,556 729,579 437,409" fill="#a3a3a3" />
            <polygon points="729,556 978,411 978,434 729,579" fill="#c9c9c9" />
            <ellipse cx="582" cy="523" rx="6" ry="9" transform="rotate(-25 582 523)" fill="#d5edff" />
            <ellipse cx="582" cy="587" rx="6" ry="9" transform="rotate(-25 582 587)" fill="#ffc6c6" />
            <ellipse cx="816" cy="611" rx="5" ry="7" transform="rotate(25 816 611)" fill="#656565" />
            <ellipse cx="850" cy="592" rx="5" ry="7" transform="rotate(25 850 592)" fill="#656565" />
            <path d="M717 782L729 789L742 782L739 780L729 785L720 780Z" fill="#fff" />
            <g v-for="p in [[665, 307], [550, 374], [866, 423]]" :key="p[0]">
              <ellipse :cx="p[0]" :cy="p[1]" rx="13.5" ry="8" fill="#000" />
              <ellipse :cx="p[0]" :cy="p[1] + 1" rx="12" ry="6.5" fill="#14e814" stroke="none" />
              <ellipse :cx="p[0]" :cy="p[1] + 1" rx="7.5" ry="4.5" fill="#0a7a14" stroke-width="1" />
              <path :d="`M${p[0] - 3} ${p[1] - 2}v6h4v-6`" fill="none" stroke-width="1" />
            </g>
            <g>
              <path d="M649 388V398C650 444 766 444 767 398V388Z" fill="#0a8464" stroke-width="1.6" />
              <ellipse cx="708" cy="388.5" rx="59" ry="34" fill="#00b990" stroke-width="1.6" />
              <ellipse cx="708" cy="388.5" rx="42.5" ry="24" fill="#086e52" stroke-width="2.6" />
              <path d="M668 396C674 372 742 372 748 396C743 410 724 412 708 412C692 412 673 408 668 396Z" fill="#fff" />
              <path d="M687 409C693 400 723 400 730 409C722 413 694 413 687 409Z" fill="#b4cc28" />
              <ellipse cx="672" cy="368" rx="6" ry="4" /><ellipse cx="696" cy="409" rx="5" ry="3" /><ellipse cx="743" cy="409" rx="6" ry="4" />
            </g>
          </g>
          <text x="712" y="434" font-size="12" fill="#1f5cff">ZC</text>
          <polygon points="708,434 711,450 708,477 705,450" fill="#3f5594" />
          <polygon points="710,479 730,464 746,459 738,467" fill="#b4e0ba" stroke="#4f8f58" stroke-width=".6" />
          <text x="732" y="454" font-size="13" fill="#2c9244">YC</text>
          <path d="M711 483L720 487" stroke="#c05070" stroke-width="1" />
          <path fill-rule="evenodd" fill="#f59340" d="M673 520C672 509 680 501 694 499C714 493 735 480 750 464L757 456L764 453L770 451L780 452L787 460L793 461L795 468C797 478 793 484 784 489C770 494 758 499 742 507C728 516 716 526 704 537L697 538C694 532 698 524 703 519C692 520 685 524 676 526ZM676 518C680 521 686 514 693 511L688 508C681 508 677 512 676 518ZM703 531C712 523 722 517 733 513L730 510C718 516 707 519 703 531ZM724 506L738 500L740 497L727 502ZM739 506L765 492L760 491L742 500ZM761 484L776 471L777 474L767 484ZM776 483L786 475L788 478L779 484Z" />
          <path d="M682 514L688 517M709 500L712 502M720 491L722 493M766 462L770 460M748 474L754 473M752 481L756 478M738 483L740 481M706 510L709 508" stroke="#fff" stroke-width="1.4" />
          <path d="M743 494L749 492M753 495L762 492" stroke="#062" stroke-width="3.5" />
          <path d="M733 488L739 486M730 501L738 498" stroke="#c05060" stroke-width="1" />
          <text x="732" y="516" font-size="13" fill="#d85a5a">XC</text>
          <g>
            <polygon points="279,755 294,745 309,751 309,770 294,780 279,771" fill="#9a9a9a" />
            <polygon points="279,755 294,745 309,751 295,760" fill="#b4b4b4" /><polygon points="295,760 309,751 309,770 295,780" fill="#858585" />
            <path d="M279 755L295 760L309 751M295 760V780" fill="none" stroke="#ccc" />
            <path d="M279 770V745" stroke="#2a48e8" stroke-width="2" /><path d="M279 771L300 782" stroke="#d03030" stroke-width="3" />
            <circle cx="279" cy="771" r="4" fill="#ddd" />
            <text x="275" y="744" font-size="12" fill="#3d5cff">Z</text><text x="303" y="792" font-size="12" fill="#f04040">X</text>
          </g>
        </svg>
      </main>

      <div v-for="row in bottom" :key="row.cls" class="row" :class="row.cls">
        <div v-for="(bar, bi) in row.bars" :key="bi" class="bar" role="toolbar">
          <span class="grip"></span>
          <template v-for="(it, k) in bar.items" :key="k">
            <span v-if="it.k === 'sep'" class="sep"></span>
            <button v-else-if="it.k === 'arrow'" class="arrow" aria-label="展开"></button>
            <button v-else-if="it.k === 'more'" class="arrow more" aria-label="更多"></button>
            <button v-else :class="[it.k, { off: it.off }]" :aria-label="it.t || it.n">
              <svg class="ic" viewBox="0 0 24 24" v-html="icons[it.n]"></svg>
              <span v-if="it.t">{{ it.t }}</span>
            </button>
          </template>
        </div>
      </div>
    </div>
    <footer><span class="pop"><svg viewBox="0 0 40 14"><circle cx="20" cy="12" r="9" fill="#c3d3e6" /><path d="M14 10l4-4 5 3 3 5" fill="none" stroke="#9fb4cc" stroke-width="2" /></svg></span></footer>
  </div>
</template>

<style>
body { margin: 0; background: #111; }
</style>

<style scoped>
* { box-sizing: border-box; }
button { border: 0; background: none; padding: 0; margin: 0; font: inherit; color: inherit; }
svg { display: block; flex: none; }
h1, h2, p, ul { margin: 0; padding: 0; list-style: none; }
.win { height: 100vh; display: flex; flex-direction: column; overflow: hidden; position: relative; background: #0b0b0b; color: #000; font: 12px/14px "Liberation Sans", "Noto Sans CJK SC", sans-serif; }
.lat { font: 10px/12px "DejaVu Sans Mono", monospace; white-space: pre; }
.ic { width: 24px; height: 24px; overflow: visible; }
.ic18 { width: 18px; height: 18px; }
.ic16 { width: 16px; height: 16px; overflow: visible; }

.title { height: 30px; flex: none; display: flex; align-items: center; gap: 4px; padding: 0 5px 2px 5px; background: linear-gradient(#2c2c2c 0, #77777a 2px, #58585a 9px, #1c1c1c 10px, #141414 100%); }
.title h1 { flex: 1; color: #fff; font: 13px/18px "Noto Sans", "Noto Sans CJK SC", sans-serif; white-space: pre; }
.brand { color: #fff; font: bold 12px/16px "DejaVu Sans", sans-serif; margin-right: 22px; }
.cap { width: 18px; height: 18px; border: 1px solid #8a8a8a; border-radius: 3px; background: linear-gradient(#777, #333); }
.cap.close { background: linear-gradient(#f09080, #d8381c); border-color: #f0b0a0; }
.cap svg, .mdi svg { width: 100%; height: 100%; }

.body { flex: 1; min-height: 0; margin: 0 4px; display: flex; flex-direction: column; background: #dadada; }
.menu { height: 24px; flex: none; display: flex; align-items: center; padding: 0 6px 0 4px; background: #e4e4e4; border-bottom: 1px solid #bbb; }
.menu .items { flex: 1; display: flex; gap: 13px; margin-left: 4px; white-space: nowrap; }
.mdi { width: 16px; height: 16px; margin-left: 3px; border: 1px solid #777; border-radius: 3px; background: #f6f6f6; }
.grip { width: 4px; align-self: stretch; margin: 5px 0; flex: none; background: repeating-linear-gradient(#999 0 2px, #f2f2f2 2px 4px) left / 2px 100% no-repeat; }

.row { display: flex; flex: none; background: linear-gradient(#dfdfdf, #d3d3d3); border-bottom: 1px solid #b2b2b2; }
.r1, .b1 { height: 34px; background: #dfdfdf; }
.r2 { height: 62px; }
.r3 { height: 35px; background: #d4d4d4; border-bottom: 2px solid #999; }
.b1 { background: #e6e6e6; }
.b2 { height: 33px; padding-left: 150px; background: #d6d6d6; border: 0; }
.bar { display: flex; align-items: center; padding: 0 1px 0 4px; border-right: 1px solid #b4b4b4; border-top: 1px solid #fafafa; flex: none; }
.b2 .bar { border-left: 1px solid #fff; padding-left: 3px; }
.r2 .bar:not(.grow) { box-shadow: 1px 0 #fff; }
.grow { flex: 1; border-right: 0; }
.grow .chev { flex: 1; }
.far { margin-left: 93px; }
.near { margin-left: 30px; }
.icon { width: 31px; display: flex; justify-content: center; }
.start, .label { display: flex; align-items: center; gap: 3px; padding-left: 3px; white-space: nowrap; }
.start { width: 67px; }
.label { width: 97px; }
.b2 .label { width: 83px; }
.off { color: #979797; }
.sep { width: 6px; align-self: stretch; margin: 3px 0; background: linear-gradient(90deg, transparent 2px, #b0b0b0 2px 3px, #fff 3px 4px, transparent 4px); flex: none; }
.r2 .sep { margin: 0; }
.big { width: 60px; height: 56px; display: flex; flex-direction: column; align-items: center; gap: 4px; line-height: 12px; }
.big span { white-space: nowrap; line-height: 14px; }
.big.off span { width: 48px; white-space: normal; line-height: 12px; }
.r2 .big { align-self: flex-start; padding-top: 4px; }
.arrow { width: 12px; height: 8px; display: flex; justify-content: center; align-items: center; flex: none; }
.arrow::after, .tri { content: ""; width: 5px; height: 3px; background: #000; clip-path: polygon(0 0, 100% 0, 50% 100%); }
.more { align-self: flex-end; margin-bottom: 4px; }
.chev { width: 45px; align-self: stretch; display: flex; flex-direction: column; align-items: flex-end; justify-content: space-between; padding: 4px 3px 0 0; }
.chev svg { width: 9px; height: 7px; }

.filters { height: 26px; flex: none; display: flex; align-items: center; padding-left: 5px; background: linear-gradient(#cfcfcf, #dcdcdc); border-bottom: 1px solid #bbb; }
.pick { position: relative; height: 17px; display: block; }
.w1 { width: 110px; margin-right: 8px; }
.w2 { width: 116px; margin-right: 5px; }
.pick select { appearance: none; width: 100%; height: 17px; border: 1px solid #44576a; border-radius: 2px; background: #fff; font: inherit; color: #000; padding: 0 18px 0 1px; line-height: 14px; }
.pick i { position: absolute; right: 1px; top: 1px; width: 16px; height: 15px; background: linear-gradient(#d5ebff, #74b4ec); pointer-events: none; display: flex; align-items: center; justify-content: center; }
.pick i::after { content: ""; width: 11px; height: 8px; background: #111; clip-path: polygon(0 0, 100% 0, 50% 100%); }
.snap { width: 23px; height: 22px; display: flex; align-items: center; justify-content: center; flex: none; }
.snap.on { background: #fff; border: 1px solid #777; border-radius: 3px; }
.last { margin-left: auto; margin-right: 3px; }

.status { height: 24px; flex: none; display: flex; align-items: center; border-top: 1px solid #fafafa; padding-right: 2px; font: bold 13px/20px "Liberation Sans", "Noto Sans CJK SC", sans-serif; background: linear-gradient(#dcdcdc, #d0d0d0); white-space: nowrap; }
.status p span { font: bold 12px/20px "Liberation Mono", monospace; white-space: pre; }
.cue { flex: 0 0 541px; padding-left: 3px; }
.msg { flex: 1; border-left: 1px solid #fff; padding-left: 3px; }
.cell { width: 20px; align-self: stretch; border-left: 1px solid #fff; }
.cell.wide { width: 38px; }
.status button { width: 20px; display: flex; justify-content: center; }

.main { flex: 1; min-height: 0; display: flex; background: #000; }
.tabs { width: 33px; flex: none; padding: 16px 0 0 6px; display: flex; flex-direction: column; gap: 2px; background: linear-gradient(90deg, #8f8f8f, #adadad); border-right: 1px solid #8a8a8a; }
.tabs button { height: 40px; flex: none; border: 1px solid #5c5c5c; border-right: 0; border-radius: 5px 0 0 5px; background: linear-gradient(90deg, #eee, #c8c8c8); display: flex; align-items: center; justify-content: center; }
.tabs .gap { margin-top: 12px; }
.tabs .on { background: #f0f0f0; margin-left: -2px; margin-right: -1px; }
.nav { width: 192px; flex: none; background: #efefef; border-right: 2px solid #fff; padding: 0 9px; display: flex; flex-direction: column; min-height: 0; }
.navhead { height: 30px; flex: none; display: flex; align-items: center; gap: 13px; padding-left: 5px; }
.pin { width: 12px; height: 12px; }
.navhead h2 { font: bold 13px/16px "Noto Sans CJK SC", sans-serif; }
.tree { flex: 1; min-height: 0; border: 1px solid #555; display: flex; flex-direction: column; background: #f4f4f4; }
.th { height: 17px; flex: none; display: flex; justify-content: space-between; background: linear-gradient(#f4f4f4, #cfcfcf); border-bottom: 1px solid #999; }
.th button { display: flex; align-items: center; gap: 15px; padding-left: 7px; }
.th i { width: 10px; height: 6px; background: #111; clip-path: polygon(50% 0, 100% 100%, 0 100%); }
.th span { width: 17px; background: #b2b2b2; }
.tb { flex: 1; min-height: 0; display: flex; }
.tb ul { flex: 1; overflow: hidden; background: #fff; color: #333; }
.tb li { height: 20px; display: flex; align-items: center; border-bottom: 1px solid #e4e4e4; white-space: nowrap; }
.tb li:nth-child(odd) { background: #f5f5f5; }
.root { padding-left: 5px; }
.root span { padding-left: 2px; line-height: 19px; }
.exp { width: 9px; height: 9px; border: 1px solid #999; background: #fff; font: 9px/7px "DejaVu Sans", sans-serif; margin-right: 6px; display: flex; justify-content: center; align-items: center; color: #000; }
.leaf { margin-left: 29px; border-left: 1px dotted #999; }
.leaf::before { content: ""; width: 9px; border-top: 1px dotted #999; }
.leaf label { flex: 1; height: 19px; display: flex; align-items: center; padding-left: 2px; gap: 2px; }
.leaf input { appearance: none; width: 12px; height: 12px; margin: 0; border: 1px solid #111; background: #fff; display: grid; place-items: center; flex: none; }
.leaf input::after { content: ""; width: 9px; height: 8px; background: #10b020; clip-path: polygon(0 40%, 25% 35%, 40% 60%, 75% 0, 100% 0, 45% 100%, 30% 100%); }
.txt { flex: 1; height: 19px; line-height: 20px; }
.txt .lat { padding-left: 7px; }
.sel .txt { background: #3298f4; color: #fff; }
.vs { width: 18px; flex: none; display: flex; flex-direction: column; align-items: center; background: #f0f0f0; padding: 7px 0 5px; }
.vs i, .hs i { background: #333; flex: none; }
.vs i { width: 6px; height: 4px; }
.up { clip-path: polygon(50% 0, 100% 100%, 0 100%); }
.down { clip-path: polygon(0 0, 100% 0, 50% 100%); margin-top: auto; }
.vs .thumb { width: 14px; height: 15px; margin-top: 9px; }
.thumb { border: 1px solid #999; background: linear-gradient(#f4f4f4, #d0d0d0); }
.hs { height: 17px; flex: none; display: flex; align-items: center; padding: 0 24px 0 6px; border-top: 1px solid #ddd; }
.hs i { width: 4px; height: 6px; }
.lf { clip-path: polygon(100% 0, 100% 100%, 0 50%); }
.rt { clip-path: polygon(0 0, 100% 50%, 0 100%); margin-left: auto; }
.hs .thumb { width: 57px; height: 14px; margin-left: 9px; text-align: center; font: 8px/12px "Liberation Sans", sans-serif; color: #444; }
.split { height: 19px; flex: none; padding-top: 4px; background: linear-gradient(90deg, #b4b4b4 0 66px, transparent 66px 104px, #b4b4b4 104px) 0 7px / 100% 1px no-repeat; }
.split span { display: block; margin: 0 auto; width: 27px; height: 6px; background: #d4d4d4; border: 1px solid #aaa; }
.view { flex: 1; min-width: 0; height: 100%; background: #000; font-family: "Noto Sans", sans-serif; }

footer { height: 9px; flex: none; background: linear-gradient(#555, #161616 2px); }
.pop { position: absolute; bottom: 0; left: 70%; width: 40px; height: 14px; border: 2px solid #2f80e0; border-bottom: 0; background: #e4edf6; overflow: hidden; }
.pop svg { width: 100%; height: 100%; }
</style>
